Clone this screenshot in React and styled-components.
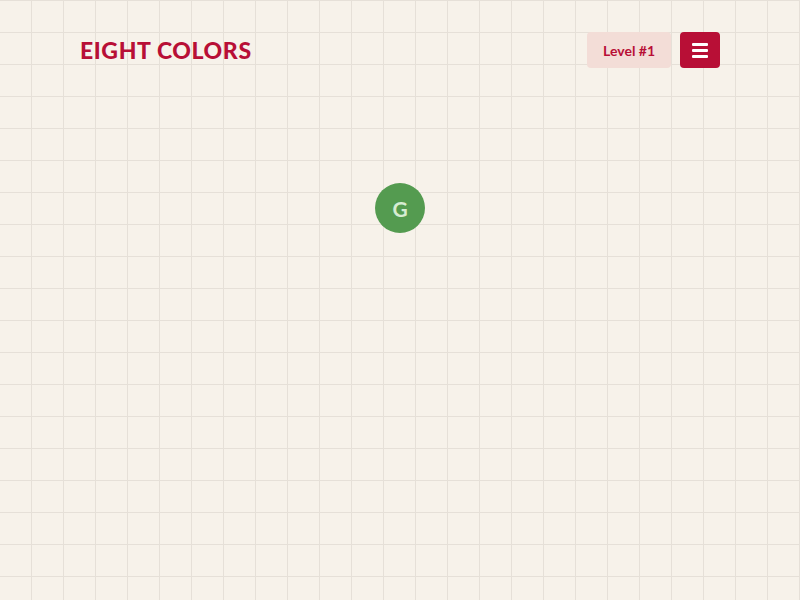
import styled, { createGlobalStyle } from "styled-components";

const GlobalStyle = createGlobalStyle`
  html, body {
    margin: 0;
    padding: 0;
  }
  body {
    font-family: "Lato", "Open Sans", sans-serif;
    background-color: #f7f2ea;
    background-image:
      linear-gradient(to right, transparent 31px, #e6e0d8 31px),
      linear-gradient(to bottom, #e6e0d8 1px, transparent 1px);
    background-size: 32px 32px;
    min-height: 100vh;
  }
`;

export default function App() {
  return (
    <>
      <GlobalStyle />
      <Page>
        <Header>
          <Title>EIGHT COLORS</Title>
          <Controls>
            <LevelBadge>Level #1</LevelBadge>
            <MenuButton aria-label="menu">
              <Bar />
              <Bar />
              <Bar />
            </MenuButton>
          </Controls>
        </Header>
        <Board>
          <Ball color="#549b50">G</Ball>
        </Board>
      </Page>
    </>
  );
}

const Page = styled.div`
  width: 100%;
  height: 600px;
  padding: 32px 80px 0;
  box-sizing: border-box;
`;

const Header = styled.header`
  display: flex;
  align-items: center;
  justify-content: space-between;
  height: 36px;
`;

const Title = styled.h1`
  margin: 0;
  font-family: "Lato", sans-serif;
  font-weight: 900;
  font-size: 23px;
  letter-spacing: 0.6px;
  color: #b80f36;
`;

const Controls = styled.div`
  display: flex;
  gap: 9px;
  height: 36px;
`;

const LevelBadge = styled.div`
  display: flex;
  align-items: center;
  padding: 0 16px;
  border-radius: 4px;
  background: #f3ddd7;
  color: #b80f36;
  font-weight: 700;
  font-size: 14px;
`;

const MenuButton = styled.button`
  width: 40px;
  height: 36px;
  border: none;
  border-radius: 4px;
  background: #b80f36;
  display: flex;
  flex-direction: column;
  align-items: center;
  justify-content: center;
  gap: 3px;
  padding: 0;
  cursor: pointer;
`;

const Bar = styled.span`
  display: block;
  width: 16px;
  height: 3px;
  border-radius: 1px;
  background: #ffffff;
`;

const Board = styled.main`
  display: flex;
  justify-content: center;
  margin-top: 115px;
`;

const Ball = styled.div`
  width: 50px;
  height: 50px;
  border-radius: 50%;
  background: ${(p) => p.color};
  color: #d6ecd2;
  display: flex;
  align-items: center;
  justify-content: center;
  font-weight: 700;
  font-size: 21px;
`;
